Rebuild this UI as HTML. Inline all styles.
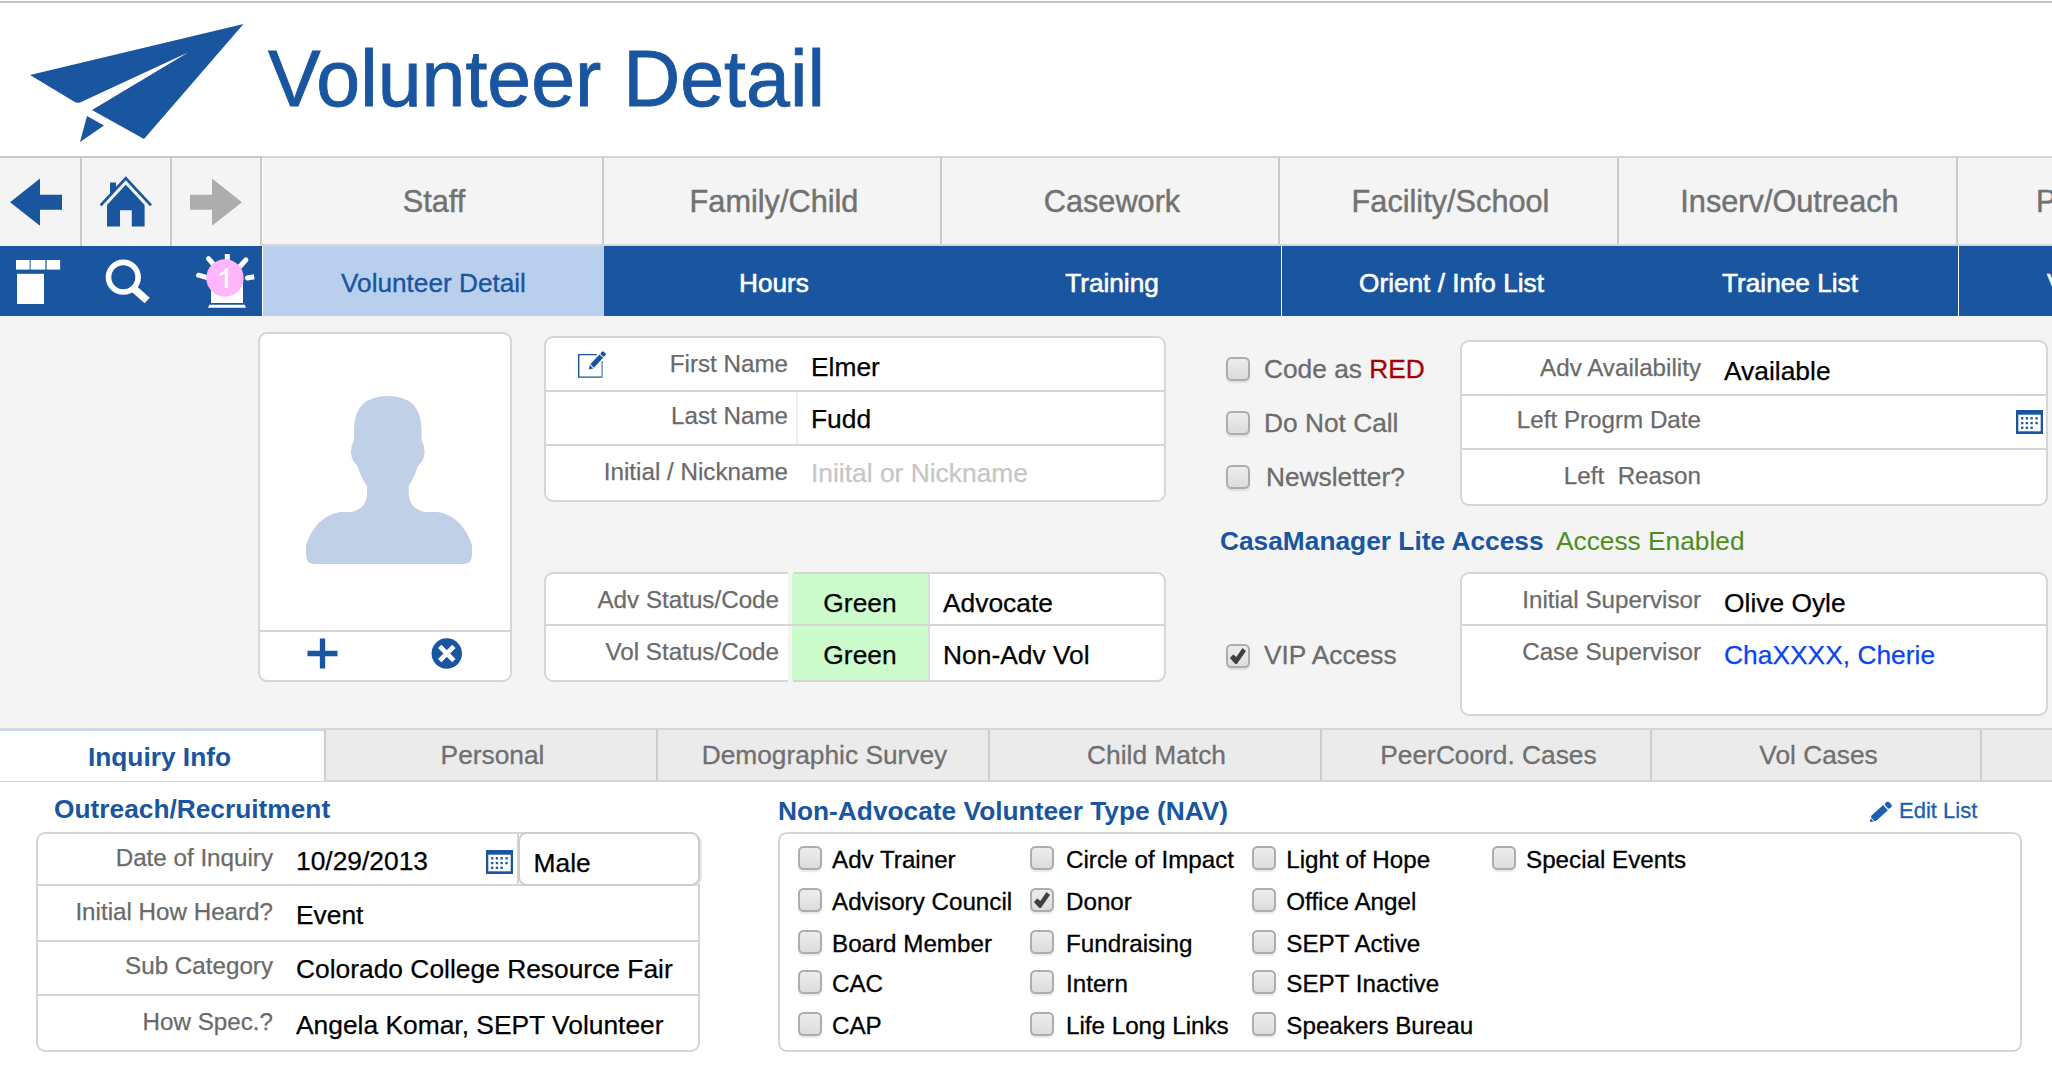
<!DOCTYPE html>
<html><head><meta charset="utf-8"><title>Volunteer Detail</title>
<style>
*{box-sizing:border-box;margin:0;padding:0}
html,body{width:2052px;height:1068px;overflow:hidden;background:#fff}
body{font-family:"Liberation Sans",sans-serif;position:relative;color:#000}
.abs{position:absolute}
.t{position:absolute;white-space:nowrap;line-height:1}
.blue{color:#1a559f}
.gry{color:#6b6b6b}
/* header */
#topline{left:0;top:1px;width:2052px;height:2px;background:#c4c4c4}
#title{left:268px;top:39.5px;font-size:78.9px;color:#1a559f;-webkit-text-stroke:0.9px #1a559f}
/* nav row */
#navrow{left:0;top:156px;width:2052px;height:90px;background:#f4f4f4;border-top:2px solid #d5d5d5;border-bottom:2px solid #d6d6d6}
.vd{position:absolute;top:158px;height:86px;width:2px;background:#cacaca}
.nav{position:absolute;top:187px;margin-left:2px;font-size:30.7px;color:#727272;-webkit-text-stroke:0.45px #727272;text-align:center;line-height:1;white-space:nowrap}
/* blue bar */
#bluebar{left:0;top:246px;width:2052px;height:70px;background:#1a559f}
#acttab{left:263px;top:246px;width:341px;height:70px;background:#b8d0ee}
.sub{position:absolute;top:270px;margin-left:1px;font-size:26.2px;color:#fff;text-align:center;line-height:1;white-space:nowrap;-webkit-text-stroke:0.6px #fff}
.bd{position:absolute;top:246px;height:70px;width:2px;background:#dfe8f4}
/* main */
#main{left:0;top:316px;width:2052px;height:412px;background:#f4f4f4}
.box{position:absolute;background:#fff;border:2px solid #d6d6d6;border-radius:9px}
.hl{position:absolute;height:2px;background:#d6d6d6}
.lab{position:absolute;white-space:nowrap;line-height:1;font-size:24.2px;color:#6a6a6a;text-align:right;-webkit-text-stroke:0.25px #6a6a6a}
.val{position:absolute;white-space:nowrap;line-height:1;font-size:26.38px;color:#000;-webkit-text-stroke:0.25px currentColor}
.cb{position:absolute;width:24px;height:24px;border-radius:5.5px;background:linear-gradient(#ededed,#dcdcdc);border:2px solid #adadad;box-shadow:0 2px 1.5px rgba(0,0,0,.09)}
.cbl{position:absolute;white-space:nowrap;line-height:1;font-size:26.3px;color:#6c6c6c;-webkit-text-stroke:0.3px currentColor}
.nvl{position:absolute;white-space:nowrap;line-height:1;font-size:24.2px;color:#000;margin-top:1px;-webkit-text-stroke:0.3px #000}
/* tabs */
#tabrow{left:0;top:728px;width:2052px;height:54px;background:#ebebeb;border-top:2px solid #d5d5d5;border-bottom:2px solid #d5d5d5}
.tvd{position:absolute;top:730px;height:50px;width:2px;background:#cdcdcd}
.tab{position:absolute;top:742px;margin-left:1.5px;font-size:26.3px;color:#707070;-webkit-text-stroke:0.3px #707070;line-height:1;white-space:nowrap}
</style></head><body>
<div class="abs" id="topline"></div>
<!-- LOGO -->
<svg class="abs" style="left:0;top:0" width="300" height="156" viewBox="0 0 300 156">
<path d="M30 75 L243.5 24 L144 139 L92 110 L188 52.5 L80 102.5 Q77 103.5 74 101.5 Z" fill="#1a559f"/>
<path d="M87 116 L104 125.5 L80 142 Z" fill="#1a559f"/>
</svg>
<div class="t" id="title">Volunteer Detail</div>
<!-- NAV ROW -->
<div class="abs" id="navrow"></div>
<div class="abs" style="left:0;top:156px;width:262px;height:2px;background:#c8c8c8"></div><div class="abs" style="left:262px;top:158px;width:1px;height:86px;background:#fff"></div><div class="abs" style="left:0;top:244px;width:260px;height:2px;background:#f4f4f4"></div><div class="vd" style="left:80px;height:88px"></div><div class="vd" style="left:170px;height:88px"></div><div class="vd" style="left:260px"></div>
<div class="vd" style="left:602px"></div><div class="vd" style="left:940px"></div><div class="vd" style="left:1278px"></div>
<div class="vd" style="left:1617px"></div><div class="vd" style="left:1956px"></div>
<div class="nav" style="left:262px;width:340px">Staff</div>
<div class="nav" style="left:604px;width:336px">Family/Child</div>
<div class="nav" style="left:942px;width:336px">Casework</div>
<div class="nav" style="left:1280px;width:337px">Facility/School</div>
<div class="nav" style="left:1619px;width:337px">Inserv/Outreach</div>
<div class="nav" style="left:2034px;text-align:left">P</div>
<!-- nav icons -->
<svg class="abs" style="left:0;top:158px" width="262" height="86" viewBox="0 158 262 86">
<path d="M10 202.2 L40 178.6 L40 194.7 L62 194.7 L62 209.8 L40 209.8 L40 225.8 Z" fill="#1a559f"/>
<path d="M242 202.2 L212 178.6 L212 194.7 L190 194.7 L190 209.8 L212 209.8 L212 225.8 Z" fill="#adadad"/>
<g fill="#1a559f"><path d="M125.8 176.3 L152 204.5 L150 206.3 L125.8 180.3 L101.6 206.3 L99.6 204.5 Z"/>
<path d="M125.8 184.8 L144.6 205 L144.6 226.4 L131.8 226.4 L131.8 210.3 L120 210.3 L120 226.4 L107 226.4 L107 205 Z"/>
<path d="M110 182.4 L116 182.4 L116 188.5 L110 195 Z"/></g>
</svg>
<!-- BLUE BAR -->
<div class="abs" id="bluebar"></div>
<div class="abs" id="acttab"></div>
<div class="bd" style="left:261.5px;width:1.5px;background:#fff"></div><div class="bd" style="left:1280.5px;width:1.5px;background:#fff"></div><div class="bd" style="left:1957.5px;width:1.5px;background:#fff"></div>
<div class="sub" style="left:262px;width:341px;color:#1a559f;-webkit-text-stroke:0.35px #1a559f">Volunteer Detail</div>
<div class="sub" style="left:604px;width:338px">Hours</div>
<div class="sub" style="left:942px;width:338px">Training</div>
<div class="sub" style="left:1282px;width:337px">Orient / Info List</div>
<div class="sub" style="left:1620px;width:338px">Trainee List</div>
<div class="sub" style="left:2046px;text-align:left">V</div>
<svg class="abs" style="left:0;top:246px" width="262" height="70" viewBox="0 246 262 70">
<g fill="#fff"><rect x="16" y="260" width="13.6" height="9.6"/><rect x="30.6" y="260" width="14.8" height="9.6"/><rect x="46.6" y="260" width="13.5" height="9.6"/><rect x="17" y="273.8" width="27" height="30.2"/></g>
<circle cx="123.3" cy="277.2" r="14.8" fill="none" stroke="#fff" stroke-width="5.6"/><path d="M133.5 288.3 L147.2 300.5" stroke="#fff" stroke-width="7.6" fill="none"/>
<g stroke="#fff" stroke-width="5" fill="none"><path d="M227.3 254 V268"/><g stroke-linecap="round"><path d="M208.5 258.7 L214 265"/><path d="M245.9 259.9 L240 266.5"/><path d="M198.6 275.2 L207 277.6"/></g><path d="M254.2 276.7 L248 277.9" /><path d="M248.5 277.8 L247.5 278" stroke-linecap="round"/></g>
<path d="M211 303 V284 Q211 266 227 266 Q243 266 243 284 V303 Z" fill="#fff"/><path d="M209.3 304.8 H244.7 L246 307.8 H208 Z" fill="#fff"/>
<circle cx="225" cy="278" r="18.7" fill="#ffb6fb"/>
<path d="M228.1 268.3 H225.6 Q224 271.5 219.8 273.4 V276.3 Q223 275 224.8 273.2 V288 H228.1 Z" fill="#fff"/>
</svg>
<!-- MAIN -->
<div class="abs" id="main"></div>
<!-- photo box -->
<div class="box" style="left:258px;top:332px;width:254px;height:350px"></div>
<div class="hl" style="left:260px;top:630px;width:250px"></div>
<svg class="abs" style="left:260px;top:334px" width="250" height="346" viewBox="260 334 250 346">
<path d="M354 440 V430 Q354 396 388 396 Q421.5 396 421.5 430 V440 Q425 447 424.5 453 Q424 461 418 466 Q414 478 408.7 486 V494 Q409 508 424 512 H438 Q462.4 516.5 472 545 V555 Q472 564 463 564 H315 Q306 564 306 555 V545 Q315.6 516.5 340 512 H352 Q367 508 367 494 V486 Q361 478 357.5 466 Q351.5 461 351 453 Q350.5 447 354 440 Z" fill="#c0d1e7"/>
<path d="M322.5 638.5 V668.5 M307.5 653.5 H337.5" stroke="#1a559f" stroke-width="5.3" fill="none"/>
<circle cx="446.8" cy="653.5" r="15.2" fill="#1a559f"/>
<path d="M439.7 646.4 L453.9 660.6 M453.9 646.4 L439.7 660.6" stroke="#fff" stroke-width="4.8" fill="none"/>
</svg>
<!-- name box -->
<div class="box" style="left:544px;top:336px;width:622px;height:166px"></div>
<div class="hl" style="left:546px;top:390px;width:618px"></div>
<div class="hl" style="left:546px;top:444px;width:618px"></div>
<div class="abs" style="left:796px;top:392px;width:1.5px;height:52px;background:#efefef"></div>
<svg class="abs" style="left:574px;top:346px" width="38" height="36" viewBox="574 346 38 36">
<path d="M596.8 354.6 H578.7 V377.1 H602.1" fill="none" stroke="#1a559f" stroke-width="1.4"/><path d="M602.1 361 V377.8" fill="none" stroke="#6d93c4" stroke-width="1.5"/>
<g transform="translate(588.9,369.5) rotate(-47.3)" fill="#1a559f"><path d="M0 0 L3.8 -2.5 L3.8 2.5 Z"/><rect x="4.8" y="-2.5" width="13.4" height="5"/><rect x="19.1" y="-2.5" width="4" height="5" rx="1.3"/></g>
</svg>
<div class="lab" style="right:1264px;top:352px">First Name</div>
<div class="lab" style="right:1264px;top:404px">Last Name</div>
<div class="lab" style="right:1264px;top:460px">Initial / Nickname</div>
<div class="val" style="left:811px;top:354px">Elmer</div>
<div class="val" style="left:811px;top:406px">Fudd</div>
<div class="val" style="left:811px;top:460px;color:#c6c6c6">Iniital or Nickname</div>
<!-- status box -->
<div class="box" style="left:544px;top:572px;width:622px;height:110px"></div>
<div class="abs" style="left:788px;top:572px;width:4.5px;height:110px;background:#f4f4f4"></div>
<div class="abs" style="left:792px;top:574px;width:136px;height:106px;background:#ccfccc"></div>
<div class="abs" style="left:928px;top:574px;width:2px;height:106px;background:#dcdcdc"></div>
<div class="hl" style="left:546px;top:624px;width:618px"></div>
<div class="lab" style="right:1273px;top:588px">Adv Status/Code</div>
<div class="lab" style="right:1273px;top:640px">Vol Status/Code</div>
<div class="val" style="left:792px;width:136px;text-align:center;top:590px">Green</div>
<div class="val" style="left:792px;width:136px;text-align:center;top:642px">Green</div>
<div class="val" style="left:943px;top:590px">Advocate</div>
<div class="val" style="left:943px;top:642px">Non-Adv Vol</div>
<!-- checkboxes -->
<div class="cb" style="left:1226px;top:357px"></div>
<div class="cb" style="left:1226px;top:411px"></div>
<div class="cb" style="left:1226px;top:465px"></div>
<div class="cb" style="left:1226px;top:644px"></div>
<div class="cbl" style="left:1264px;top:356px">Code as <span style="color:#a40000">RED</span></div>
<div class="cbl" style="left:1264px;top:410px">Do Not Call</div>
<div class="cbl" style="left:1266px;top:464px">Newsletter?</div>
<div class="cbl" style="left:1264px;top:642px">VIP Access</div>
<svg class="abs" style="left:1226px;top:642px" width="26" height="26" viewBox="0 0 26 26"><path d="M3.9 15.9 L7.3 12.5 L10.3 15.1 L16.5 6.1 L20 8.9 L10.9 22 H9.3 Z" fill="#404040"/></svg>
<!-- availability box -->
<div class="box" style="left:1460px;top:340px;width:588px;height:166px"></div>
<div class="hl" style="left:1462px;top:394px;width:584px"></div>
<div class="hl" style="left:1462px;top:448px;width:584px"></div>
<div class="lab" style="right:351px;top:356px">Adv Availability</div>
<div class="lab" style="right:351px;top:408px">Left Progrm Date</div>
<div class="lab" style="right:351px;top:464px">Left&nbsp; Reason</div>
<div class="val" style="left:1724px;top:358px">Available</div>
<!-- access -->
<div class="t" style="left:1220px;top:528px;font-size:26.3px;font-weight:bold;color:#1a559f">CasaManager Lite Access</div>
<div class="t" style="left:1556px;top:528px;font-size:26.3px;color:#4d8c1f">Access Enabled</div>
<!-- supervisor box -->
<div class="box" style="left:1460px;top:572px;width:588px;height:144px"></div>
<div class="hl" style="left:1462px;top:624px;width:584px"></div>
<div class="lab" style="right:351px;top:588px">Initial Supervisor</div>
<div class="lab" style="right:351px;top:640px">Case Supervisor</div>
<div class="val" style="left:1724px;top:590px">Olive Oyle</div>
<div class="val" style="left:1724px;top:642px;color:#0a46f0">ChaXXXX, Cherie</div>
<!-- TABS -->
<div class="abs" id="tabrow"></div>
<div class="abs" style="left:0;top:728px;width:324px;height:54px;background:linear-gradient(#d8d8d8 0,#d8d8d8 1.5px,#bfd8f7 1.5px,#bfd8f7 2.6px,#fff 2.6px,#fff 52.8px,#bfd8f7 52.8px,#bfd8f7 54px)"></div>
<div class="tvd" style="left:324px"></div><div class="tvd" style="left:656px"></div><div class="tvd" style="left:988px"></div>
<div class="tvd" style="left:1320px"></div><div class="tvd" style="left:1650px"></div><div class="tvd" style="left:1980px"></div>
<div class="tab" style="left:-4px;width:324px;text-align:center;font-weight:bold;color:#1a559f;top:744px;-webkit-text-stroke:0">Inquiry Info</div>
<div class="tab" style="left:326px;width:330px;text-align:center">Personal</div>
<div class="tab" style="left:658px;width:330px;text-align:center">Demographic Survey</div>
<div class="tab" style="left:990px;width:330px;text-align:center">Child Match</div>
<div class="tab" style="left:1322px;width:330px;text-align:center">PeerCoord. Cases</div>
<div class="tab" style="left:1652px;width:330px;text-align:center">Vol Cases</div>
<!-- LOWER -->
<div class="t" style="left:54px;top:796px;font-size:26.3px;font-weight:bold;color:#1a559f">Outreach/Recruitment</div>
<div class="t" style="left:778px;top:798px;font-size:26.3px;font-weight:bold;color:#1a559f">Non-Advocate Volunteer Type (NAV)</div>
<div class="t" style="left:1899px;top:800px;font-size:22px;color:#1a5fb4;-webkit-text-stroke:0.3px #1a5fb4">Edit List</div>
<svg class="abs" style="left:1866px;top:796px" width="30" height="30" viewBox="1866 796 30 30"><g transform="translate(1869.8,822) rotate(-42.5)" fill="#1a5fb4"><path d="M0 0 L3.2 -2.2 L3.2 2.2 Z"/><path d="M4 -2.8 L6 -3.5 H21.3 V3.5 H6 L4 2.8 Z"/><rect x="22.6" y="-3.5" width="5" height="7" rx="1.8"/></g></svg>
<div class="box" style="left:36px;top:832px;width:664px;height:220px"></div>
<div class="hl" style="left:38px;top:884px;width:660px"></div>
<div class="hl" style="left:38px;top:940px;width:660px"></div>
<div class="hl" style="left:38px;top:994px;width:660px"></div>
<div class="abs" style="left:690px;top:834px;width:12px;height:52px;background:#e6e6e6;border-radius:0 9px 9px 0"></div><div class="abs" style="left:517px;top:832px;width:1.5px;height:54px;background:#d6d6d6"></div><div class="box" style="left:518px;top:832px;width:182px;height:54px;border-color:#cdcdcd"></div>
<div class="lab" style="right:1779px;top:846px">Date of Inquiry</div>
<div class="lab" style="right:1779px;top:900px">Initial How Heard?</div>
<div class="lab" style="right:1779px;top:954px">Sub Category</div>
<div class="lab" style="right:1779px;top:1010px">How Spec.?</div>
<div class="val" style="left:296px;top:848px">10/29/2013</div>
<div class="val" style="left:296px;top:902px">Event</div>
<div class="val" style="left:296px;top:956px">Colorado College Resource Fair</div>
<div class="val" style="left:296px;top:1012px">Angela Komar, SEPT Volunteer</div>
<div class="val" style="left:533.5px;top:850px">Male</div>
<div class="box" style="left:778px;top:832px;width:1244px;height:220px"></div>
<svg class="abs" style="left:486px;top:850px" width="27" height="24" viewBox="0 0 27 24"><rect x="0" y="0" width="27" height="24" fill="#1a559f"/><rect x="2.3" y="4.7" width="22.4" height="16.6" fill="#fff"/><g fill="#1a559f"><rect x="5.05" y="7.15" width="2.3" height="2.3"/><rect x="9.75" y="7.15" width="2.3" height="2.3"/><rect x="14.45" y="7.15" width="2.3" height="2.3"/><rect x="19.45" y="7.15" width="2.3" height="2.3"/><rect x="5.05" y="11.95" width="2.3" height="2.3"/><rect x="9.75" y="11.95" width="2.3" height="2.3"/><rect x="14.45" y="11.95" width="2.3" height="2.3"/><rect x="19.45" y="11.95" width="2.3" height="2.3"/><rect x="5.05" y="16.65" width="2.3" height="2.3"/><rect x="9.75" y="16.65" width="2.3" height="2.3"/><rect x="14.45" y="16.65" width="2.3" height="2.3"/></g></svg>
<svg class="abs" style="left:2016px;top:410px" width="27" height="24" viewBox="0 0 27 24"><rect x="0" y="0" width="27" height="24" fill="#1a559f"/><rect x="2.3" y="4.7" width="22.4" height="16.6" fill="#fff"/><g fill="#1a559f"><rect x="5.05" y="7.15" width="2.3" height="2.3"/><rect x="9.75" y="7.15" width="2.3" height="2.3"/><rect x="14.45" y="7.15" width="2.3" height="2.3"/><rect x="19.45" y="7.15" width="2.3" height="2.3"/><rect x="5.05" y="11.95" width="2.3" height="2.3"/><rect x="9.75" y="11.95" width="2.3" height="2.3"/><rect x="14.45" y="11.95" width="2.3" height="2.3"/><rect x="19.45" y="11.95" width="2.3" height="2.3"/><rect x="5.05" y="16.65" width="2.3" height="2.3"/><rect x="9.75" y="16.65" width="2.3" height="2.3"/><rect x="14.45" y="16.65" width="2.3" height="2.3"/></g></svg>
<div class="cb" style="left:798px;top:846.0px"></div>
<div class="nvl" style="left:832px;top:846.5px">Adv Trainer</div>
<div class="cb" style="left:798px;top:888.0px"></div>
<div class="nvl" style="left:832px;top:888.5px">Advisory Council</div>
<div class="cb" style="left:798px;top:930.0px"></div>
<div class="nvl" style="left:832px;top:930.5px">Board Member</div>
<div class="cb" style="left:798px;top:970.0px"></div>
<div class="nvl" style="left:832px;top:970.5px">CAC</div>
<div class="cb" style="left:798px;top:1012.0px"></div>
<div class="nvl" style="left:832px;top:1012.5px">CAP</div>
<div class="cb" style="left:1030px;top:846.0px"></div>
<div class="nvl" style="left:1066px;top:846.5px">Circle of Impact</div>
<div class="cb" style="left:1030px;top:888.0px"></div>
<svg class="abs" style="left:1030px;top:886px" width="26" height="26" viewBox="0 0 26 26"><path d="M3.9 15.9 L7.3 12.5 L10.3 15.1 L16.5 6.1 L20 8.9 L10.9 22 H9.3 Z" fill="#404040"/></svg>
<div class="nvl" style="left:1066px;top:888.5px">Donor</div>
<div class="cb" style="left:1030px;top:930.0px"></div>
<div class="nvl" style="left:1066px;top:930.5px">Fundraising</div>
<div class="cb" style="left:1030px;top:970.0px"></div>
<div class="nvl" style="left:1066px;top:970.5px">Intern</div>
<div class="cb" style="left:1030px;top:1012.0px"></div>
<div class="nvl" style="left:1066px;top:1012.5px">Life Long Links</div>
<div class="cb" style="left:1252px;top:846.0px"></div>
<div class="nvl" style="left:1286.3px;top:846.5px">Light of Hope</div>
<div class="cb" style="left:1252px;top:888.0px"></div>
<div class="nvl" style="left:1286.3px;top:888.5px">Office Angel</div>
<div class="cb" style="left:1252px;top:930.0px"></div>
<div class="nvl" style="left:1286.3px;top:930.5px">SEPT Active</div>
<div class="cb" style="left:1252px;top:970.0px"></div>
<div class="nvl" style="left:1286.3px;top:970.5px">SEPT Inactive</div>
<div class="cb" style="left:1252px;top:1012.0px"></div>
<div class="nvl" style="left:1286.3px;top:1012.5px">Speakers Bureau</div>
<div class="cb" style="left:1492px;top:846.0px"></div>
<div class="nvl" style="left:1526px;top:846.5px">Special Events</div>
</body></html>
